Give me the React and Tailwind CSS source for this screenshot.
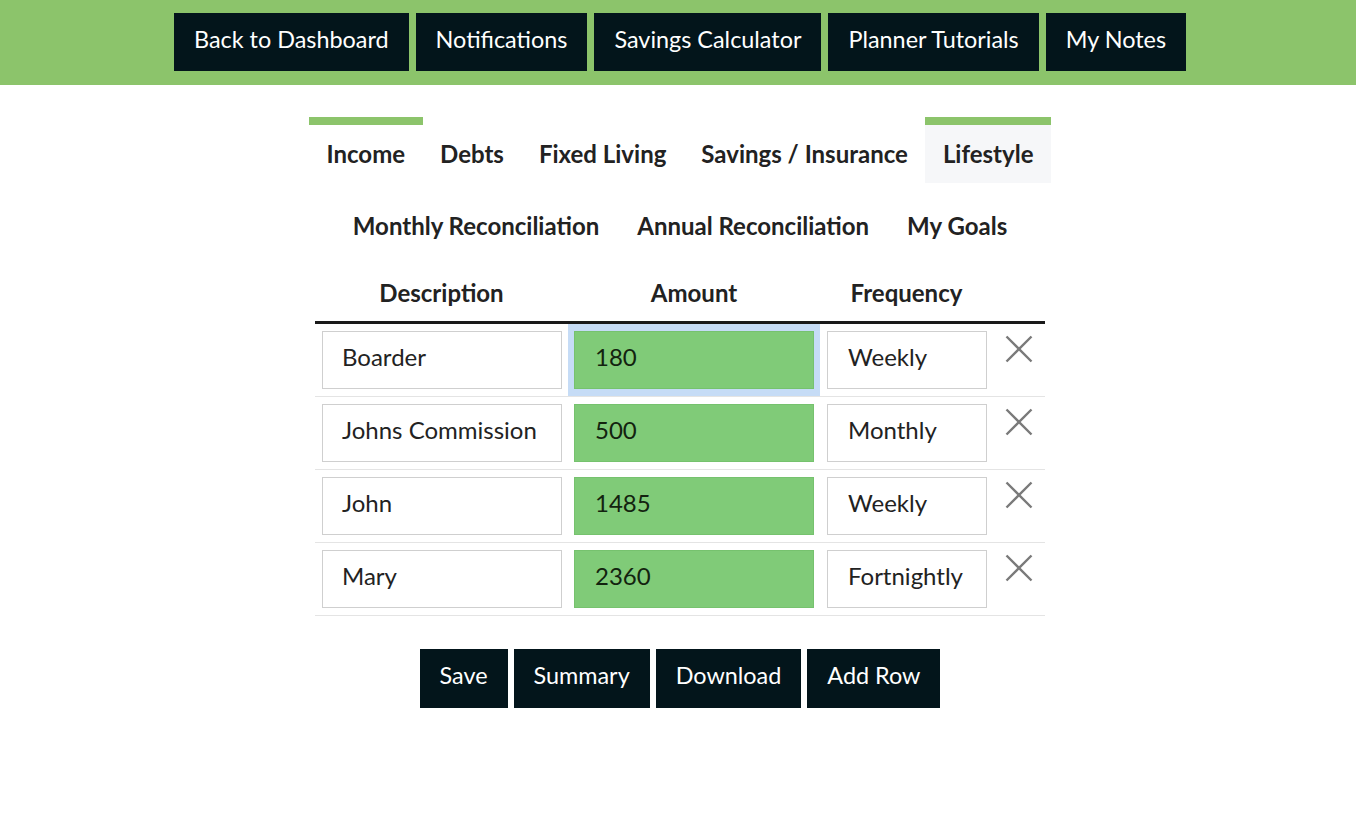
import React from "react";

const navs = ["Back to Dashboard", "Notifications", "Savings Calculator", "Planner Tutorials", "My Notes"];
const tabs1 = [
  { label: "Income", bar: true, bg: false },
  { label: "Debts" },
  { label: "Fixed Living" },
  { label: "Savings / Insurance" },
  { label: "Lifestyle", bar: true, bg: true },
];
const tabs2 = ["Monthly Reconciliation", "Annual Reconciliation", "My Goals"];
const rows = [
  { d: "Boarder", a: "180", f: "Weekly", sel: true },
  { d: "Johns Commission", a: "500", f: "Monthly" },
  { d: "John", a: "1485", f: "Weekly" },
  { d: "Mary", a: "2360", f: "Fortnightly" },
];

function XIcon() {
  return (
    <svg width="28" height="28" viewBox="0 0 28 28" fill="none" stroke="#7a7a7a" strokeWidth="2.4" strokeLinecap="butt">
      <path d="M1.5 1.5 L26.5 26.5 M26.5 1.5 L1.5 26.5" />
    </svg>
  );
}

export default function App() {
  return (
    <div className="min-h-screen bg-white font-['Lato','Noto_Sans',sans-serif] text-[#222]">
      <header className="h-[85px] bg-[#8cc46b] flex items-start pt-[13px] justify-center gap-[7px] pl-1">
        {navs.map((n) => (
          <button key={n} className="h-[58px] px-5 pb-[5px] bg-[#03151b] text-white text-[23.4px] leading-none">
            {n}
          </button>
        ))}
      </header>

      <div className="pl-1">
        <div className="mt-[32px] flex justify-center">
          {tabs1.map((t) => (
            <div
              key={t.label}
              className={`h-[66px] px-[17.5px] flex items-center border-t-8 text-[24px] font-bold ${
                t.bar ? "border-[#8cc46b]" : "border-transparent"
              } ${t.bg ? "bg-[#f6f7f9]" : ""}`}
            >
              {t.label}
            </div>
          ))}
        </div>
        <div className="mt-[6px] flex justify-center">
          {tabs2.map((t) => (
            <div key={t} className="h-[66px] px-[19px] flex items-center border-t-8 border-transparent text-[24px] font-bold">
              {t}
            </div>
          ))}
        </div>

        <div className="mx-auto w-[730px] mt-[10px]">
          <div className="grid grid-cols-[253px_252px_173px_52px] h-[59px] border-b-[3px] border-[#1a1a1a] items-center text-[24px] font-bold text-center">
            <div>Description</div>
            <div>Amount</div>
            <div>Frequency</div>
            <div></div>
          </div>
          {rows.map((r) => (
            <div key={r.d} className="grid grid-cols-[253px_252px_173px_52px] border-b border-[#e4e4e4]">
              <div className="pl-[7px] pr-[6px] py-[7px]">
                <div className="h-[58px] border border-[#cfcfcf] flex items-center pl-[19px] pb-[6px] text-[24px] text-[#222]">{r.d}</div>
              </div>
              <div className={`px-[6px] py-[7px] ${r.sel ? "bg-[#c6dcf6]" : ""}`}>
                <div className="h-[58px] border border-[#76c26e] bg-[#80cb78] flex items-center pl-[20px] pb-[6px] text-[24px] text-[#13230f]">{r.a}</div>
              </div>
              <div className="pl-[7px] pr-[6px] py-[7px]">
                <div className="h-[58px] border border-[#cfcfcf] flex items-center pl-[20px] pb-[6px] text-[24px] text-[#222]">{r.f}</div>
              </div>
              <div className="flex justify-center pt-[11px]">
                <XIcon />
              </div>
            </div>
          ))}
        </div>

        <div className="mt-[33px] flex justify-center gap-[6px]">
          {["Save", "Summary", "Download", "Add Row"].map((b) => (
            <button key={b} className="h-[59px] px-5 pb-[5px] bg-[#03151b] text-white text-[23.4px] leading-none">
              {b}
            </button>
          ))}
        </div>
      </div>
    </div>
  );
}
